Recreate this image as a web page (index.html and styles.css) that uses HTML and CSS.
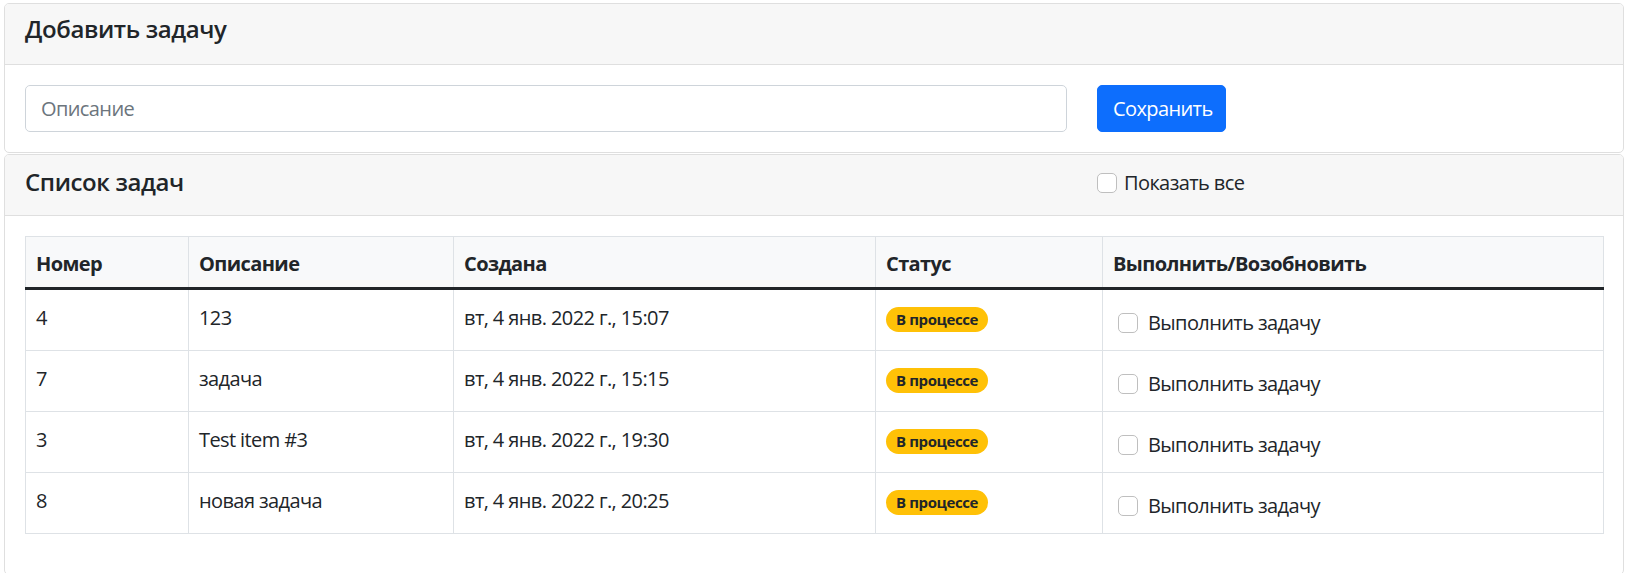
FILE: index.html
```html
<!DOCTYPE html>
<html lang="ru">
<head>
<meta charset="utf-8">
<title>Задачи</title>
<link rel="stylesheet" href="styles.css">
</head>
<body>
<div class="page">
  <section class="card">
    <div class="card-header">
      <h5 class="card-title">Добавить задачу</h5>
    </div>
    <div class="card-body add-body">
      <input class="text-input" type="text" placeholder="Описание">
      <button class="btn-primary" type="button">Сохранить</button>
    </div>
  </section>

  <section class="card card-list">
    <div class="card-header list-header">
      <h5 class="card-title list-title">Список задач</h5>
      <label class="check-label header-check">
        <input type="checkbox" class="check">
        <span>Показать все</span>
      </label>
    </div>
    <div class="card-body">
      <table class="tasks">
        <colgroup>
          <col class="c-num"><col class="c-desc"><col class="c-date"><col class="c-status"><col class="c-act">
        </colgroup>
        <thead>
          <tr><th>Номер</th><th>Описание</th><th>Создана</th><th>Статус</th><th>Выполнить/Возобновить</th></tr>
        </thead>
        <tbody>
          <tr>
            <td>4</td><td>123</td><td>вт, 4 янв. 2022 г., 15:07</td>
            <td><span class="badge">В процессе</span></td>
            <td><label class="check-label row-check"><input type="checkbox" class="check"><span>Выполнить задачу</span></label></td>
          </tr>
          <tr>
            <td>7</td><td>задача</td><td>вт, 4 янв. 2022 г., 15:15</td>
            <td><span class="badge">В процессе</span></td>
            <td><label class="check-label row-check"><input type="checkbox" class="check"><span>Выполнить задачу</span></label></td>
          </tr>
          <tr>
            <td>3</td><td>Test item #3</td><td>вт, 4 янв. 2022 г., 19:30</td>
            <td><span class="badge">В процессе</span></td>
            <td><label class="check-label row-check"><input type="checkbox" class="check"><span>Выполнить задачу</span></label></td>
          </tr>
          <tr>
            <td>8</td><td>новая задача</td><td>вт, 4 янв. 2022 г., 20:25</td>
            <td><span class="badge">В процессе</span></td>
            <td><label class="check-label row-check"><input type="checkbox" class="check"><span>Выполнить задачу</span></label></td>
          </tr>
        </tbody>
      </table>
    </div>
  </section>
</div>
</body>
</html>
```

FILE: styles.css
```css
html, body {
  margin: 0;
  padding: 0;
  overflow: hidden;
  background: #fff;
}
body {
  font-family: "Segoe UI", "Open Sans", "Noto Sans", sans-serif;
  font-size: 20px;
  line-height: 1.5;
  letter-spacing: -0.6px;
  color: #212529;
}
.page {
  padding: 3px 5px 0 4px;
}
.card {
  border: 1px solid #dfdfdf;
  border-radius: 5px;
  background: #fff;
  overflow: hidden;
}
.card-list {
  margin-top: 1px;
}
.card-header {
  background: #f7f7f7;
  border-bottom: 1px solid #dfdfdf;
  padding: 10px 20px;
  height: 61px;
  box-sizing: border-box;
}
.card-title {
  margin: 0;
  font-size: 24px;
  font-weight: 600;
  line-height: 30px;
  letter-spacing: -0.4px;
}
.list-header {
  display: flex;
  align-items: center;
  padding-top: 10px;
}
.list-title {
  width: 1072px;
  flex: none;
  margin-top: -6px;
}
.card-body {
  padding: 20px;
}
.add-body {
  display: flex;
  gap: 30px;
}
.text-input {
  width: 1042px;
  height: 47px;
  box-sizing: border-box;
  border: 1px solid #ced4da;
  border-radius: 5px;
  padding: 7px 15px;
  font: inherit;
  letter-spacing: -0.6px;
  color: #212529;
  outline: none;
}
.text-input::placeholder {
  color: #6c757d;
}
.btn-primary {
  height: 47px;
  width: 129px;
  box-sizing: border-box;
  background: #0d6efd;
  border: 1px solid #0d6efd;
  border-radius: 5px;
  color: #fff;
  font: inherit;
  letter-spacing: -0.6px;
  padding: 7px 15px;
}
.check-label {
  display: flex;
  align-items: center;
}
.check {
  appearance: none;
  -webkit-appearance: none;
  margin: 0;
  width: 20px;
  height: 20px;
  border: 1px solid #bfbfbf;
  border-radius: 5px;
  background: #fff;
  flex: none;
}
.header-check {
  gap: 7px;
  margin-top: -4px;
}
.row-check {
  gap: 10px;
  padding-left: 5px;
  margin: 5px 0 4px;
}
.tasks {
  width: 100%;
  table-layout: fixed;
  border-collapse: collapse;
  border: 1px solid #dee2e6;
  margin-bottom: 20px;
}
.c-num { width: 163px; }
.c-desc { width: 265px; }
.c-date { width: 422px; }
.c-status { width: 227px; }
.c-act { width: 501px; }
.tasks th, .tasks td {
  border: 1px solid #dee2e6;
  padding: 12px 10px 8px;
  text-align: left;
  vertical-align: top;
}
.tasks tbody td {
  padding: 13px 10px 8px;
}
.tasks thead th {
  background: #f8f9fa;
  font-weight: 700;
  border-bottom: 3px solid #212529;
  white-space: nowrap;
}
.badge {
  display: inline-block;
  margin-top: 4px;
  background: #ffc107;
  color: #212529;
  font-size: 15px;
  font-weight: 700;
  line-height: 1;
  letter-spacing: -0.4px;
  padding: 5px 10px;
  border-radius: 13px;
  vertical-align: top;
}
```
